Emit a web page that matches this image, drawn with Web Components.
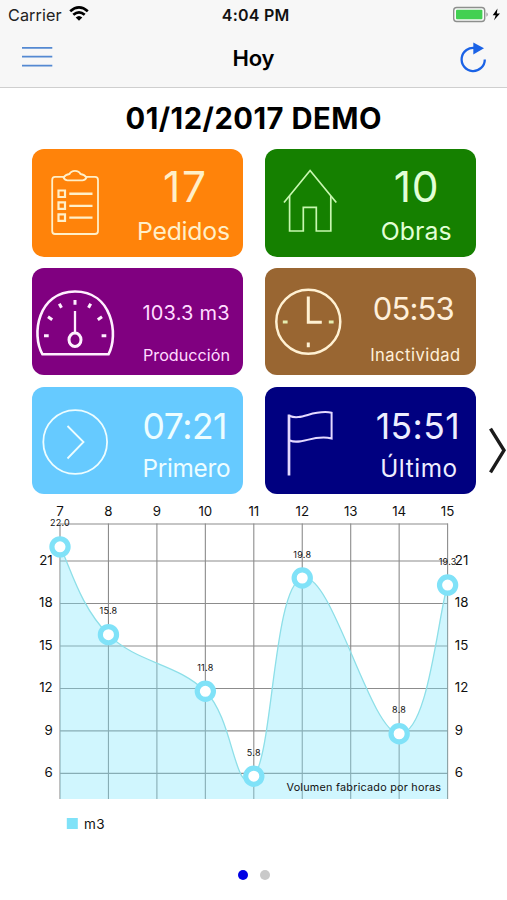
<!DOCTYPE html>
<html lang="es">
<head>
<meta charset="utf-8">
<title>Hoy</title>
<style>
body{margin:0;background:#fff;font-family:Inter,"Liberation Sans",sans-serif;color:#000;overflow:hidden}
</style>
</head>
<body>
<day-screen></day-screen>
<script>
/* One line of text: baseline offset, size and overall width are attributes. */
class FitText extends HTMLElement{
  connectedCallback(){
    const a=n=>this.getAttribute(n);
    const root=this.attachShadow({mode:'open'});
    root.innerHTML=`<style>
      :host{display:block;white-space:nowrap;line-height:0;height:${a('base')}px;width:${a('w')}px;font-size:${a('size')}px;font-weight:${a('weight')||400}}
      i{display:inline-block;width:0;height:${a('base')}px}
      span{display:inline-block;line-height:0}
    </style><i></i><span>${a('text')}</span>`;
    const s=root.querySelector('span'),n=a('text').length;
    const natural=s.getBoundingClientRect().width;
    s.style.letterSpacing=((+a('w')-natural)/Math.max(1,n-1))+'px';
  }
}
customElements.define('fit-text',FitText);

class StatusBar extends HTMLElement{
  constructor(){super();this.attachShadow({mode:'open'}).innerHTML=`<style>
    :host{display:grid;grid-template-columns:1fr auto 1fr;height:30px;color:#222}
    .l{display:flex;padding-left:8px;gap:7px}
    .r{display:flex;justify-content:flex-end;padding:6px 3px 0 0}
    .c{color:#111;padding-left:4px}
    .l svg{margin-top:6px}
  </style>
  <div class="l"><fit-text text="Carrier" base="20.6" size="16.2" w="53.5"></fit-text>
  <svg width="20" height="16" viewBox="0 0 20 16" fill="none" stroke="#000" stroke-width="2.7"><path d="M1.2 5.3Q10-2.4 18.8 5.3"/><path d="M4.3 8.8Q10 3.8 15.7 8.8"/><path d="M10 14.8L6.7 11.5Q10 8.5 13.3 11.5Z" fill="#000" stroke="none"/></svg></div>
  <div class="c"><fit-text text="4:04 PM" base="20.6" size="16" w="67.5" weight="600"></fit-text></div>
  <div class="r"><svg width="52" height="18" viewBox="0 0 52 18"><rect x="1.7" y="1.5" width="31" height="14" rx="3" fill="#fafafa" stroke="#8d8f8d" stroke-width="1.4"/><rect x="4" y="3.8" width="26.4" height="9.4" rx="1" fill="#42d052"/><path d="M34.5 6.2Q36.9 8.4 34.5 10.8Z" fill="#888"/><path d="M45.5 2.5L40.7 9.2H43.7L42 14.2L48 7.4H44.8Z" fill="#000"/></svg></div>`}
}
customElements.define('status-bar',StatusBar);

class NavBar extends HTMLElement{
  constructor(){super();this.attachShadow({mode:'open'}).innerHTML=`<style>
    :host{display:grid;grid-template-columns:1fr auto 1fr;height:57px}
    .m{padding:16px 0 0 22px}
    .r{display:flex;justify-content:flex-end;padding:9px 18px 0 0}
  </style>
  <div class="m"><svg width="31" height="22" viewBox="0 0 31 22" stroke="#5489d2" stroke-width="1.7"><path d="M0 1.8H30.3M0 10.7H30.3M0 19.7H30.3"/></svg></div>
  <fit-text text="Hoy" base="35.5" size="22" w="42" weight="600"></fit-text>
  <div class="r"><svg width="32" height="36" viewBox="457 39 32 36"><path d="M484.8 59.5A11.6 11.6 0 1 1 475.5 48.1" fill="none" stroke="#1a62e6" stroke-width="2.3"/><path d="M473.3 42.4L484 48.3L473.3 54.5Z" fill="#1a62e6"/></svg></div>`}
}
customElements.define('nav-bar',NavBar);

/* Coloured summary card: icon is slotted, the two text lines sit on the right. */
class StatTile extends HTMLElement{
  connectedCallback(){
    const a=n=>this.getAttribute(n).split('|');
    const [v,vs,vw,vx]=a('value'),[l,ls,lw,lx,lb]=a('label');
    this.attachShadow({mode:'open'}).innerHTML=`<style>
    :host{display:grid;grid-template-columns:92px 1fr;border-radius:12px;background:${this.getAttribute('bg')};color:${this.getAttribute('fg')};overflow:hidden}
    ::slotted(svg){display:block;fill:none;stroke:currentColor}
    .t{display:block}
    .t>:first-child{margin-left:${vx-92}px}
    .t>:last-child{margin-left:${lx-92}px}
    </style><slot></slot><div class="t">
    <fit-text text="${v}" base="52.6" size="${vs}" w="${vw}"></fit-text>
    <fit-text text="${l}" base="${lb-52.4}" size="${ls}" w="${lw}"></fit-text></div>`;
  }
}
customElements.define('stat-tile',StatTile);

class VolumeChart extends HTMLElement{
  connectedCallback(){
    const X=h=>60+(h-7)*48.45,Y=v=>561+(21-v)*14.16;
    const d=[[7,22],[8,15.8],[10,11.8],[11,5.8],[12,19.8],[14,8.8],[15,19.3]];
    const at=i=>d[Math.max(0,Math.min(d.length-1,i))];
    let path=`M${X(7)} ${Y(22)}`;
    for(let i=1;i<d.length;i++){
      const pp=at(i-2),p=at(i-1),c=at(i),n=at(i+1),k=.2;
      path+=`C${X(p[0]+(c[0]-pp[0])*k)} ${Y(p[1]+(c[1]-pp[1])*k)} ${X(c[0]-(n[0]-p[0])*k)} ${Y(c[1]-(n[1]-p[1])*k)} ${X(c[0])} ${Y(c[1])}`;
    }
    let g='',t='',c='';
    for(let h=7;h<=15;h++){
      g+=`<path d="M${X(h)} 523.5V799"/>`;
      t+=`<text x="${X(h)}" y="515.8" text-anchor="middle">${h}</text>`;
    }
    g+='<path d="M60 524H448"/>';
    for(let v=6;v<=21;v+=3){
      g+=`<path d="M60 ${Y(v)}H448"/>`;
      t+=`<text x="52.7" y="${Y(v)+3.7}" text-anchor="end">${v}</text><text x="454.8" y="${Y(v)+3.7}">${v}</text>`;
    }
    for(const [h,v] of d){
      c+=`<circle cx="${X(h)}" cy="${Y(v)}" r="8.1"/>`;
      t+=`<text class="v" x="${X(h)}" y="${Y(v)-20.4}" text-anchor="middle">${v.toFixed(1)}</text>`;
    }
    this.attachShadow({mode:'open'}).innerHTML=`<style>
    :host{display:block}
    svg{display:block;font-size:13.3px;fill:#111}
    .v{font-size:9px;letter-spacing:.25px}
    </style><svg width="507" height="350" viewBox="0 495 507 350">
    <clipPath id="p"><rect x="60" y="520" width="388" height="279"/></clipPath>
    <g stroke="#8c8c8c" stroke-width="1.1">${g}</g>
    <g clip-path="url(#p)"><path d="${path}V799H60Z" fill="#80e7fb" fill-opacity=".37"/><path d="${path}" fill="none" stroke="#8ddfe8" stroke-width="1.3"/></g>
    <g fill="#fff" stroke="#80e2f8" stroke-width="5.2">${c}</g>${t}
    <text x="286.5" y="790.5" font-size="10.8" textLength="154.5">Volumen fabricado por horas</text>
    <rect x="66.8" y="818" width="11" height="11" fill="#80e2f8"/><text x="84" y="828.8" font-size="13.5" textLength="20.5">m3</text></svg>`;
  }
}
customElements.define('volume-chart',VolumeChart);

class PageDots extends HTMLElement{
  constructor(){super();this.attachShadow({mode:'open'}).innerHTML=`<style>
    :host{display:flex;justify-content:center;gap:12px;padding-top:24.6px}
    i{width:10px;height:10px;border-radius:50%;background:#c9c9c9}
    i:first-of-type{background:#0000e4}
  </style><i></i><i></i>`}
}
customElements.define('page-dots',PageDots);

class DayScreen extends HTMLElement{
  constructor(){super();this.attachShadow({mode:'open'}).innerHTML=`<style>
    :host{display:block;height:900px;width:507px;position:relative}
    header{background:#f7f7f7;border-bottom:1.4px solid #cfcfcf;height:87px}
    .title{display:flex;justify-content:center;height:61px}
    .grid{display:grid;grid-template-columns:211px 211px;grid-auto-rows:107.6px;column-gap:21.7px;row-gap:11.3px;padding:0 0 1px 32px}
    .next{position:absolute;left:487px;top:425px}
  </style>
  <header><status-bar></status-bar><nav-bar></nav-bar></header>
  <div class="title"><fit-text text="01/12/2017 DEMO" base="41" size="29.2" w="256" weight="650"></fit-text></div>
  <div class="grid">
    <stat-tile bg="#ff830a" fg="#ffefc8" value="17|42.5|43|131" label="Pedidos|24.8|93|105|90.5">
      <svg width="92" height="107" viewBox="32 149 92 107" stroke-width="1.8"><path d="M65 176.8H55Q52.2 176.8 52.2 180V231Q52.2 234 55 234H95Q98 234 98 231V180Q98 176.8 95 176.8H86"/><path d="M63.5 177.5Q65.5 174.5 69.5 174Q71 170.8 75 170.8Q79 170.8 80.5 174Q84.5 174.5 86.5 177.5Q85 180.3 82.5 180.3H67.5Q65 180.3 63.5 177.5Z"/><path stroke-width="2.2" d="M58.5 190.5h6.5v6.5h-6.5zM58.5 202.3h6.5v6.5h-6.5zM58.5 214.3h6.5v6.5h-6.5z"/><path stroke-width="2.4" d="M69.3 193.8H92.5M69.3 205.9H92.5M69.3 217.6H92.5"/></svg></stat-tile>
    <stat-tile bg="#158000" fg="#e2ffd6" value="10|42.5|45|129" label="Obras|24.8|71|116|90.5">
      <svg width="92" height="107" viewBox="264.7 149 92 107" stroke-width="1.7" style="color:#c8f7b0"><path d="M283.7 202.5L309.8 170.5L336 202.5"/><path d="M289.3 196V231H303V207.3H316V231H330.5V196"/></svg></stat-tile>
    <stat-tile bg="#800080" fg="#ffdcff" value="103.3 m3|20|87|110.5" label="Producción|16.2|87|111|92.5">
      <svg width="92" height="107" viewBox="32 267.5 92 107" stroke-width="2.6" style="color:#fff0ff"><path d="M42.5 353.8C31 334 38 291 75 291C112 291 119 334 108.5 353.8Z"/><ellipse cx="75" cy="339.3" rx="6" ry="6.8" stroke-width="3"/><path stroke-width="2.3" d="M75 310.5V332"/><path stroke-width="3" d="M75 299.5V304.3M59.3 303.3L61.5 307.3M90.7 303.3L88.5 307.3M48 316.3L52.2 319.3M102 316.3L97.8 319.3M44 335.3H48.7M101.6 335.3H106.3"/></svg></stat-tile>
    <stat-tile bg="#996632" fg="#fff0da" value="05:53|31|82|108" label="Inactividad|16.6|90|105.5|92.5">
      <svg width="92" height="107" viewBox="264.7 267.5 92 107" stroke-width="2.5" style="color:#fff1d3"><circle cx="308" cy="321.3" r="32"/><path stroke-width="3" d="M308 296V321.7H321.5"/><path stroke-width="3" stroke="#e5edb0" d="M282.5 321.5H287.3M328.5 321.5H333.3"/><path stroke-width="3" d="M308 342V346.7"/></svg></stat-tile>
    <stat-tile bg="#66caff" fg="#edfdff" value="07:21|35.5|85|110.5" label="Primero|24.3|88|110.5|90.3">
      <svg width="92" height="107" viewBox="32 386.5 92 107" stroke-width="1.8"><circle cx="75.2" cy="441.5" r="31.9"/><path d="M67.5 425.5L83.5 441.5L67.5 458"/></svg></stat-tile>
    <stat-tile bg="#000080" fg="#eeeeff" value="15:51|35.5|84|111" label="Último|24.3|77|115.5|90.3">
      <svg width="92" height="107" viewBox="264.7 386.5 92 107" stroke-width="2" style="color:#e4d9ff"><path stroke-width="2.7" d="M288.7 414V475"/><path d="M289.5 415.5C301 420.5 313 408.5 331.3 412.2V438C313 433.5 301 445 289.5 440"/></svg></stat-tile>
  </div>
  <volume-chart></volume-chart>
  <page-dots></page-dots>
  <svg class="next" width="20" height="52" viewBox="487 425 20 52" fill="none" stroke="#1b1b1b" stroke-width="3.4"><path d="M490.5 428.7L504 450.3L490.5 472.3"/></svg>`}
}
customElements.define('day-screen',DayScreen);
</script>
</body>
</html>
